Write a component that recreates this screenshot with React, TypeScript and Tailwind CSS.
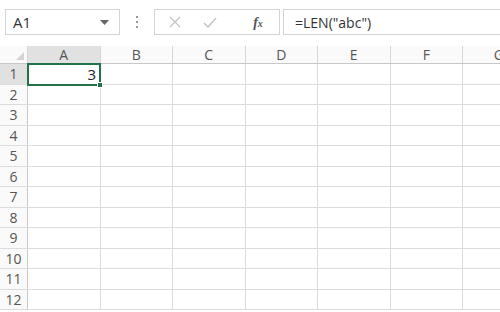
import React from 'react';

const COLS = ['A', 'B', 'C', 'D', 'E', 'F', 'G'];
const ROWS = Array.from({ length: 12 }, (_, i) => i + 1);

const FormulaBar: React.FC = () => (
  <div className="flex items-center h-[44px] pt-[9px] pb-[9px] pl-[5px] bg-white">
    {/* name box */}
    <div className="flex items-center justify-between w-[115px] h-[26px] border border-[#d4d4d4] bg-white pl-[7px] pr-[10px]">
      <span className="text-[15px] text-[#333]">A1</span>
      <svg width="9" height="5" viewBox="0 0 9 5">
        <path d="M0 0 L9 0 L4.5 5 Z" fill="#666" />
      </svg>
    </div>
    {/* separator dots */}
    <div className="flex flex-col items-center justify-center gap-[3px] w-[34px]">
      <span className="w-[2px] h-[2px] bg-[#9a9a9a]" />
      <span className="w-[2px] h-[2px] bg-[#9a9a9a]" />
      <span className="w-[2px] h-[2px] bg-[#9a9a9a]" />
    </div>
    {/* cancel / enter / fx */}
    <div className="flex items-center w-[126px] h-[26px] border border-[#d4d4d4] bg-white">
      <div className="w-[40px] flex justify-center">
        <svg width="12" height="12" viewBox="0 0 12 12">
          <path d="M1 1 L11 11 M11 1 L1 11" stroke="#c4c4c4" strokeWidth="1.3" />
        </svg>
      </div>
      <div className="w-[30px] flex justify-center">
        <svg width="14" height="11" viewBox="0 0 14 11">
          <path d="M1 6 L5 10 L13 1" stroke="#c4c4c4" strokeWidth="1.5" fill="none" />
        </svg>
      </div>
      <div className="flex-1 flex justify-center pl-[12px]">
        <span className="text-[14px] italic font-bold text-[#555]" style={{ fontFamily: '"Liberation Serif", serif' }}>
          f<span className="text-[10px]">x</span>
        </span>
      </div>
    </div>
    {/* formula input */}
    <div className="flex items-center flex-1 ml-[3px] h-[26px] border-y border-l border-[#d4d4d4] bg-white pl-[11px]">
      <span className="text-[14px] text-[#333]">=LEN("abc")</span>
    </div>
  </div>
);

const App: React.FC = () => {
  return (
    <div
      className="w-[500px] h-[312px] overflow-hidden bg-white"
      style={{ fontFamily: '"Open Sans", "Liberation Sans", sans-serif' }}
    >
      <FormulaBar />
      <div className="h-[2px] bg-white" />
      {/* column header */}
      <div className="flex h-[18px] border-b border-[#c8c8c8] bg-[#fafafa]">
        <div className="relative w-[28px] shrink-0 border-r border-[#d6d6d6]">
          <svg className="absolute right-[3px] bottom-[3px]" width="8" height="8" viewBox="0 0 8 8">
            <path d="M8 0 L8 8 L0 8 Z" fill="#d4d4d4" />
          </svg>
        </div>
        {COLS.map((c) => (
          <div
            key={c}
            className={`w-[72.5px] shrink-0 flex items-center justify-center text-[14px] text-[#555] border-r border-[#d6d6d6] ${
              c === 'A' ? 'bg-[#e1e1e1]' : ''
            }`}
          >
            {c}
          </div>
        ))}
      </div>
      {/* rows */}
      {ROWS.map((r) => (
        <div key={r} className="flex h-[20.5px] border-b border-[#dcdcdc]">
          <div
            className={`w-[28px] shrink-0 flex items-center justify-center text-[14px] text-[#555] border-r border-[#c8c8c8] ${
              r === 1 ? 'bg-[#e1e1e1]' : 'bg-[#fafafa]'
            }`}
          >
            {r}
          </div>
          {COLS.map((c) => (
            <div key={c} className="relative w-[72.5px] shrink-0 border-r border-[#dcdcdc]">
              {r === 1 && c === 'A' && (
                <div className="absolute -left-[1px] -top-[1px] w-[74px] h-[23px] border-2 border-[#217346] flex items-center justify-end pr-[3px] z-10">
                  <span className="text-[15px] text-[#222]">3</span>
                  <span className="absolute -right-[4px] -bottom-[4px] w-[6px] h-[6px] bg-[#217346] border border-white" />
                </div>
              )}
            </div>
          ))}
        </div>
      ))}
    </div>
  );
};

export default App;
